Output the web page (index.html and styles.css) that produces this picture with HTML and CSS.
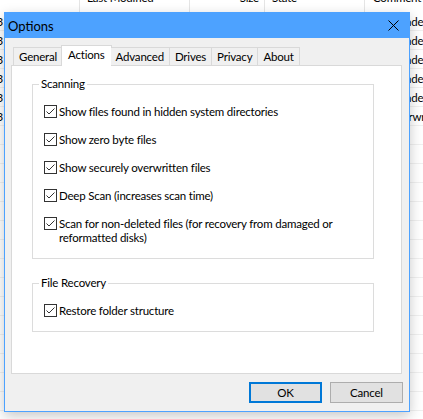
FILE: index.html
```html
<!DOCTYPE html>
<html>
<head>
<meta charset="utf-8">
<link rel="stylesheet" href="styles.css">
</head>
<body>
<div class="desktop">
  <div class="listview">
    <div class="lv-header">
      <div class="col c0">Name</div>
      <div class="col c1">Last Modified</div>
      <div class="col c2 right">Size</div>
      <div class="col c3">State</div>
      <div class="col c4">Comment</div>
    </div>
    <div class="lv-row"><div class="col c0 right">image0003</div><div class="col c1"></div><div class="col c2"></div><div class="col c3"></div><div class="col c4">Undeleted</div></div>
    <div class="lv-row"><div class="col c0 right">image0013</div><div class="col c1"></div><div class="col c2"></div><div class="col c3"></div><div class="col c4">Undeleted</div></div>
    <div class="lv-row"><div class="col c0 right">image0023</div><div class="col c1"></div><div class="col c2"></div><div class="col c3"></div><div class="col c4">Undeleted</div></div>
    <div class="lv-row"><div class="col c0 right">image0033</div><div class="col c1"></div><div class="col c2"></div><div class="col c3"></div><div class="col c4">Undeleted</div></div>
    <div class="lv-row"><div class="col c0 right">image0043</div><div class="col c1"></div><div class="col c2"></div><div class="col c3"></div><div class="col c4">Undeleted</div></div>
    <div class="lv-row"><div class="col c0 right">image0053</div><div class="col c1"></div><div class="col c2"></div><div class="col c3"></div><div class="col c4 ow">Overwritten</div></div>
    <div class="lv-row"><div class="col c0"></div><div class="col c1"></div><div class="col c2"></div><div class="col c3"></div><div class="col c4"></div></div>
    <div class="lv-row"><div class="col c0"></div><div class="col c1"></div><div class="col c2"></div><div class="col c3"></div><div class="col c4"></div></div>
    <div class="lv-row"><div class="col c0"></div><div class="col c1"></div><div class="col c2"></div><div class="col c3"></div><div class="col c4"></div></div>
    <div class="lv-row"><div class="col c0"></div><div class="col c1"></div><div class="col c2"></div><div class="col c3"></div><div class="col c4"></div></div>
    <div class="lv-row"><div class="col c0"></div><div class="col c1"></div><div class="col c2"></div><div class="col c3"></div><div class="col c4"></div></div>
    <div class="lv-row"><div class="col c0"></div><div class="col c1"></div><div class="col c2"></div><div class="col c3"></div><div class="col c4"></div></div>
    <div class="lv-row"><div class="col c0"></div><div class="col c1"></div><div class="col c2"></div><div class="col c3"></div><div class="col c4"></div></div>
    <div class="lv-row"><div class="col c0"></div><div class="col c1"></div><div class="col c2"></div><div class="col c3"></div><div class="col c4"></div></div>
    <div class="lv-row"><div class="col c0"></div><div class="col c1"></div><div class="col c2"></div><div class="col c3"></div><div class="col c4"></div></div>
    <div class="lv-row"><div class="col c0"></div><div class="col c1"></div><div class="col c2"></div><div class="col c3"></div><div class="col c4"></div></div>
    <div class="lv-row"><div class="col c0"></div><div class="col c1"></div><div class="col c2"></div><div class="col c3"></div><div class="col c4"></div></div>
    <div class="lv-row"><div class="col c0"></div><div class="col c1"></div><div class="col c2"></div><div class="col c3"></div><div class="col c4"></div></div>
    <div class="lv-row"><div class="col c0"></div><div class="col c1"></div><div class="col c2"></div><div class="col c3"></div><div class="col c4"></div></div>
    <div class="lv-row"><div class="col c0"></div><div class="col c1"></div><div class="col c2"></div><div class="col c3"></div><div class="col c4"></div></div>
    <div class="lv-row"><div class="col c0"></div><div class="col c1"></div><div class="col c2"></div><div class="col c3"></div><div class="col c4"></div></div>
  </div>

  <div class="dialog">
    <div class="titlebar">
      <span class="title">Options</span>
      <svg class="close" width="11" height="11" viewBox="0 0 11 11"><path d="M0.5 0.5 L10.5 10.5 M10.5 0.5 L0.5 10.5" stroke="#000" stroke-width="1" fill="none"/></svg>
    </div>
    <div class="body">
      <div class="tabs">
        <div class="tab">General</div>
        <div class="tab active">Actions</div>
        <div class="tab">Advanced</div>
        <div class="tab">Drives</div>
        <div class="tab">Privacy</div>
        <div class="tab">About</div>
      </div>
      <div class="panel">
        <div class="group">
          <span class="group-label">Scanning</span>
          <div class="check"><svg class="box" width="13" height="13" viewBox="0 0 13 13"><rect x="0.5" y="0.5" width="12" height="12" fill="#fff" stroke="#333"/><path d="M2.5 6.5 L5 9 L10.5 3.5" stroke="#333" fill="none"/></svg><span>Show files found in hidden system directories</span></div>
          <div class="check"><svg class="box" width="13" height="13" viewBox="0 0 13 13"><rect x="0.5" y="0.5" width="12" height="12" fill="#fff" stroke="#333"/><path d="M2.5 6.5 L5 9 L10.5 3.5" stroke="#333" fill="none"/></svg><span>Show zero byte files</span></div>
          <div class="check"><svg class="box" width="13" height="13" viewBox="0 0 13 13"><rect x="0.5" y="0.5" width="12" height="12" fill="#fff" stroke="#333"/><path d="M2.5 6.5 L5 9 L10.5 3.5" stroke="#333" fill="none"/></svg><span>Show securely overwritten files</span></div>
          <div class="check"><svg class="box" width="13" height="13" viewBox="0 0 13 13"><rect x="0.5" y="0.5" width="12" height="12" fill="#fff" stroke="#333"/><path d="M2.5 6.5 L5 9 L10.5 3.5" stroke="#333" fill="none"/></svg><span>Deep Scan (increases scan time)</span></div>
          <div class="check"><svg class="box" width="13" height="13" viewBox="0 0 13 13"><rect x="0.5" y="0.5" width="12" height="12" fill="#fff" stroke="#333"/><path d="M2.5 6.5 L5 9 L10.5 3.5" stroke="#333" fill="none"/></svg><span>Scan for non-deleted files (for recovery from damaged or<br>reformatted disks)</span></div>
        </div>
        <div class="group">
          <span class="group-label">File Recovery</span>
          <div class="check"><svg class="box" width="13" height="13" viewBox="0 0 13 13"><rect x="0.5" y="0.5" width="12" height="12" fill="#fff" stroke="#333"/><path d="M2.5 6.5 L5 9 L10.5 3.5" stroke="#333" fill="none"/></svg><span>Restore folder structure</span></div>
        </div>
      </div>
      <div class="buttons">
        <div class="btn default">OK</div>
        <div class="btn">Cancel</div>
      </div>
    </div>
  </div>
</div>
</body>
</html>
```

FILE: styles.css
```css
html, body {
  margin: 0;
  padding: 0;
  width: 423px;
  height: 419px;
  overflow: hidden;
  background: #fff;
  font-family: Lato, "Noto Sans", sans-serif;
  font-size: 11.5px;
  letter-spacing: -0.2px;
  color: #000;
}

.desktop {
  position: relative;
  width: 423px;
  height: 419px;
  overflow: hidden;
}

.listview {
  position: absolute;
  left: -100px;
  top: -10px;
  width: 600px;
}

.lv-header, .lv-row {
  display: flex;
  height: 19px;
  line-height: 19px;
}

.lv-header {
  height: 22px;
  line-height: 16px;
  background: #fff;
}

.lv-row {
  border-bottom: 1px solid #f0f0f0;
  box-sizing: border-box;
}

.col {
  box-sizing: border-box;
  padding: 0 6px;
  border-right: 1px solid #e5e5e5;
  white-space: nowrap;
  overflow: hidden;
}

.right { text-align: right; }

.c0 { width: 180px; padding-right: 76px; }
.c1 { width: 110px; padding-left: 7px; }
.c2 { width: 75px; padding-right: 5px; }
.c3 { width: 100px; padding-left: 7px; }
.c4 { width: 135px; padding-left: 32px; border-right: none; }
.c4.ow { padding-left: 23px; }
.lv-header .c4 { padding-left: 8px; }

.dialog {
  position: absolute;
  left: 4px;
  top: 12px;
  width: 406px;
  height: 400px;
  box-sizing: border-box;
  border: 1px solid #4da2ff;
  background: #f0f0f0;
  display: flex;
  flex-direction: column;
  box-shadow: 0 4px 12px rgba(0,0,0,0.22);
}

.titlebar {
  height: 25px;
  background: #4da2ff;
  display: flex;
  align-items: center;
  padding-left: 3px;
  flex: none;
}

.title {
  font-size: 13px;
  letter-spacing: 0;
  flex: 1;
}

.close {
  margin-right: 10px;
}

.body {
  flex: 1;
  display: flex;
  flex-direction: column;
  padding: 7px 7px 0 6px;
}

.tabs {
  display: flex;
  align-items: flex-end;
  height: 20px;
  padding-left: 2px;
  position: relative;
  z-index: 1;
}

.tab {
  height: 18px;
  box-sizing: border-box;
  border: 1px solid #d9d9d9;
  border-bottom: none;
  border-right: none;
  padding: 0 5px;
  line-height: 17px;
  background: #f0f0f0;
}

.tab:last-child { border-right: 1px solid #d9d9d9; }

.tab.active {
  height: 21px;
  margin-bottom: -1px;
  background: #fff;
  border-right: 1px solid #d9d9d9;
  margin-left: -1px;
  margin-right: -1px;
  padding: 0 6px;
  line-height: 18px;
}

.tab.active + .tab { border-left: none; }

.panel {
  height: 309px;
  box-sizing: border-box;
  background: #fff;
  border: 1px solid #d9d9d9;
  padding: 18px 27px 0 20px;
  display: flex;
  flex-direction: column;
  gap: 24px;
}

.group {
  position: relative;
  border: 1px solid #dcdcdc;
  padding: 20px 0 13px 11px;
  display: flex;
  flex-direction: column;
  gap: 14px;
}

.group-label {
  position: absolute;
  left: 6px;
  top: -8px;
  padding: 0 2px;
  background: #fff;
  line-height: 14px;
}

.check {
  display: flex;
  align-items: flex-start;
  line-height: 14px;
}

.check .box {
  flex: none;
  margin-right: 2px;
  margin-top: 0;
}

.buttons {
  display: flex;
  justify-content: flex-end;
  gap: 8px;
  padding-top: 8px;
  margin-right: -1px;
}

.btn {
  width: 73px;
  height: 21px;
  box-sizing: border-box;
  border: 1px solid #adadad;
  background: #e1e1e1;
  text-align: center;
  line-height: 19px;
}

.btn.default {
  border: 2px solid #0078d7;
  line-height: 17px;
}
```
